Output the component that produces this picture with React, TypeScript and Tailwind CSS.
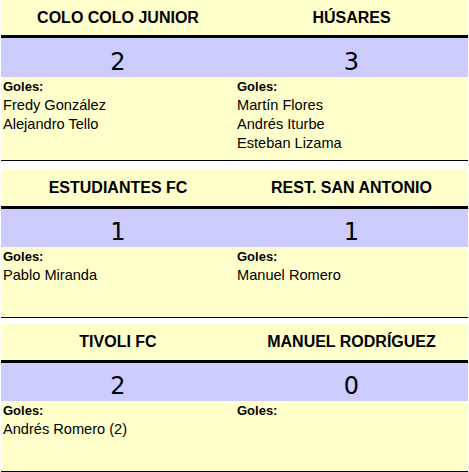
const matches = [
  {
    home: "COLO COLO JUNIOR",
    away: "HÚSARES",
    homeScore: 2,
    awayScore: 3,
    homeGoals: ["Fredy González", "Alejandro Tello"],
    awayGoals: ["Martín Flores", "Andrés Iturbe", "Esteban Lizama"],
    head: "h-[35px]",
    score: "h-[39px]",
    goals: "h-[83px]",
    gap: "mb-[8px]",
  },
  {
    home: "ESTUDIANTES FC",
    away: "REST. SAN ANTONIO",
    homeScore: 1,
    awayScore: 1,
    homeGoals: ["Pablo Miranda"],
    awayGoals: ["Manuel Romero"],
    head: "h-[37px]",
    score: "h-[38px]",
    goals: "h-[70px]",
    gap: "mb-[6px]",
  },
  {
    home: "TIVOLI FC",
    away: "MANUEL RODRÍGUEZ",
    homeScore: 2,
    awayScore: 0,
    homeGoals: ["Andrés Romero (2)"],
    awayGoals: [],
    head: "h-[36px]",
    score: "h-[38px]",
    goals: "h-[70px]",
    gap: "",
  },
];

function Goals({ names }: { names: string[] }) {
  return (
    <div className="pl-[2px]">
      <div className="h-[19px] text-[13px] font-bold leading-[19px]">Goles:</div>
      {names.map((n) => (
        <div key={n} className="h-[19px] text-[14.6px] leading-[19px]">
          {n}
        </div>
      ))}
    </div>
  );
}

export default function App() {
  return (
    <div
      className="w-[469px] bg-white pl-px text-black"
      style={{ fontFamily: '"Liberation Sans", Arial, sans-serif' }}
    >
      {matches.map((m, i) => (
        <div key={i} className={`w-[467px] ${m.gap}`}>
          <div className={`grid grid-cols-[234px_233px] bg-[#ffffcc] ${m.head}`}>
            <div className="flex items-center justify-center text-[16px] font-bold">{m.home}</div>
            <div className="flex items-center justify-center text-[16px] font-bold">{m.away}</div>
          </div>
          <div className="h-[3px] bg-black" />
          <div className={`grid grid-cols-[234px_233px] bg-[#ccccff] ${m.score}`}>
            {[m.homeScore, m.awayScore].map((s, j) => (
              <div
                key={j}
                className="flex items-end justify-center pb-[3px] text-[24px] leading-none"
                style={{ fontFamily: '"DejaVu Sans", Verdana, sans-serif' }}
              >
                {s}
              </div>
            ))}
          </div>
          <div className={`grid grid-cols-[234px_233px] bg-[#ffffcc] ${m.goals}`}>
            <Goals names={m.homeGoals} />
            <Goals names={m.awayGoals} />
          </div>
          <div className="h-px bg-black" />
        </div>
      ))}
    </div>
  );
}
